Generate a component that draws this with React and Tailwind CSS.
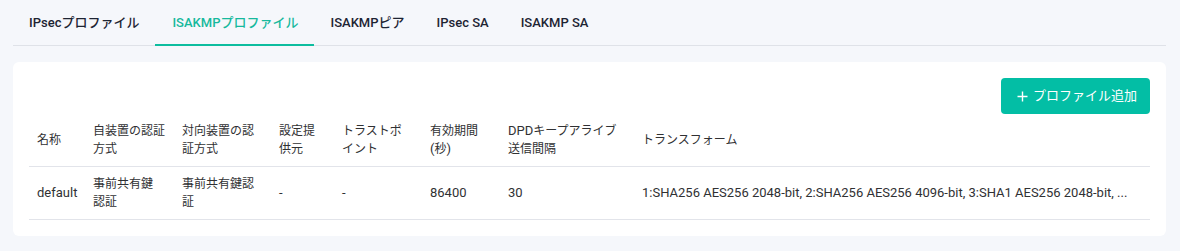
import React from "react";

const tabs = ["IPsecプロファイル", "ISAKMPプロファイル", "ISAKMPピア", "IPsec SA", "ISAKMP SA"];
const font = { fontFamily: 'Roboto, "Noto Sans CJK JP", sans-serif' };

function J({ children }) {
  return <span className="text-[12px]">{children}</span>;
}

function L({ children }) {
  return <div className="whitespace-nowrap">{children}</div>;
}

const th = "px-2 py-2 font-normal align-middle";
const td = "px-2 py-2 align-middle";

export default function App() {
  return (
    <div className="min-h-[251px] w-[1180px] bg-[#f5f7fb] pl-[13px] pr-[14px] text-[13px] text-[#303133]" style={font}>
      <div className="flex h-[46px] border-b border-[#dfe2e8]">
        {tabs.map((t, i) => (
          <div
            key={t}
            className={
              i === 1
                ? "flex items-center border-b-2 border-[#0dbd9f] pl-[17px] pr-[16px] pt-[1px] -mb-px font-medium text-[#16b99d]"
                : "flex items-center px-[16px] pt-[1px] font-medium text-[#1d2433]"
            }
          >
            {t}
          </div>
        ))}
      </div>
      <div className="mt-4 rounded-md bg-white p-4">
        <div className="flex justify-end">
          <button className="flex h-9 items-center gap-[5px] rounded bg-[#03bea5] pl-4 pr-[13px] text-[13px] text-white">
            <svg width="11" height="11" viewBox="0 0 11 11">
              <path d="M5.5 0.5v10M0.5 5.5h10" stroke="white" strokeWidth="1.4" fill="none" />
            </svg>
            <span>プロファイル追加</span>
          </button>
        </div>
        <table className="w-full table-fixed border-collapse text-left leading-[18px]">
          <colgroup>
            <col className="w-[56px]" />
            <col className="w-[89px]" />
            <col className="w-[97px]" />
            <col className="w-[63px]" />
            <col className="w-[88px]" />
            <col className="w-[78px]" />
            <col className="w-[134px]" />
            <col />
          </colgroup>
          <thead>
            <tr className="border-b border-[#e2e4ea]">
              <th className={th}><L><J>名称</J></L></th>
              <th className={th}><L><J>自装置の認証</J></L><L><J>方式</J></L></th>
              <th className={th}><L><J>対向装置の認</J></L><L><J>証方式</J></L></th>
              <th className={th}><L><J>設定提</J></L><L><J>供元</J></L></th>
              <th className={th}><L><J>トラストポ</J></L><L><J>イント</J></L></th>
              <th className={th}><L><J>有効期間</J></L><L>(<J>秒</J>)</L></th>
              <th className={th}><L>DPD<J>キープアライブ</J></L><L><J>送信間隔</J></L></th>
              <th className={th}><L><J>トランスフォーム</J></L></th>
            </tr>
          </thead>
          <tbody>
            <tr className="border-b border-[#e2e4ea]">
              <td className={td}>default</td>
              <td className={td}><L><J>事前共有鍵</J></L><L><J>認証</J></L></td>
              <td className={td}><L><J>事前共有鍵認</J></L><L><J>証</J></L></td>
              <td className={td}>-</td>
              <td className={td}>-</td>
              <td className={td}>86400</td>
              <td className={td}>30</td>
              <td className={td + " whitespace-nowrap"}>1:SHA256 AES256 2048-bit, 2:SHA256 AES256 4096-bit, 3:SHA1 AES256 2048-bit, ...</td>
            </tr>
          </tbody>
        </table>
      </div>
    </div>
  );
}
